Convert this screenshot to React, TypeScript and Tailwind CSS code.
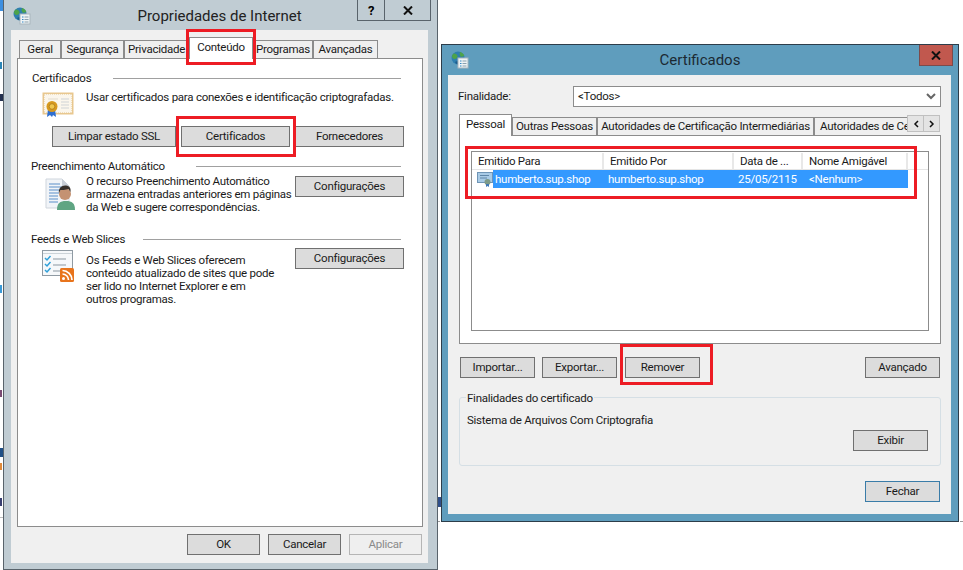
import React from "react";

const font = { fontFamily: 'Roboto, "Noto Sans", sans-serif' };

function Btn({ w, children, variant = "normal", className = "" }: { w: string; children: React.ReactNode; variant?: "normal" | "disabled" | "default"; className?: string }) {
  const v =
    variant === "disabled"
      ? "border-[#b5b5b5] bg-[#efefef] text-[#8a8a8a]"
      : variant === "default"
      ? "border-[#3a7ca8] bg-[#dcdcdc] text-[#1a1a1a]"
      : "border-[#707070] bg-[#dcdcdc] text-[#1a1a1a]";
  return <div className={`${w} h-[21px] shrink-0 border flex items-center justify-center leading-none ${v} ${className}`}>{children}</div>;
}

function Tab({ w, children, active = false, className = "" }: { w: string; children: React.ReactNode; active?: boolean; className?: string }) {
  return active ? (
    <div className={`${w} h-[22px] border border-b-0 border-[#8c8c8c] bg-white flex items-start justify-center pt-[2px] relative z-10 -mb-px leading-[15px] ${className}`}>{children}</div>
  ) : (
    <div className={`${w} h-[18px] border border-b-0 border-[#8c8c8c] bg-[#efefef] flex items-center justify-center whitespace-nowrap overflow-hidden ${className}`}>{children}</div>
  );
}

function Heading({ children, lineClass, mt }: { children: React.ReactNode; lineClass: string; mt: string }) {
  return (
    <div className={`flex items-center ${mt} h-[14px]`}>
      <span className="whitespace-nowrap">{children}</span>
      <div className={`h-px bg-[#a0a0a0] ${lineClass}`} />
    </div>
  );
}

function GlobeIcon() {
  return (
    <svg width="18" height="18" viewBox="0 0 18 18">
      <circle cx="7" cy="7" r="6.500" fill="#2f7fb0" />
      <path d="M3 2.500c2 0 3 1 3.500 2.500S5 8 3.500 8 .8 6 1 5s1-2.500 2-2.500zM9 1c2 .5 4 2 4.300 4L10 6 8.500 3.500z" fill="#4da34a" />
      <path d="M4 11c1-1 3-1 4 0l-1 2.300C6 13.500 5 12.500 4 11z" fill="#1e5c8a" />
      <rect x="7" y="7" width="10" height="10" fill="#eef3f5" stroke="#a9b6bd" />
      <path d="M9 10h1.500M9 12.500h1.500M9 15h1.500" stroke="#2f86c5" strokeWidth="1.200" />
      <path d="M11.500 10h4M11.500 12.500h4M11.500 15h4" stroke="#8da0ad" />
    </svg>
  );
}

function CertIcon() {
  return (
    <svg width="32" height="26" viewBox="0 0 32 26">
      <rect x="0.500" y="0.500" width="31" height="22" fill="#e9c88f" />
      <rect x="2" y="2" width="28" height="19" fill="#fbf6ec" stroke="#e5c58d" strokeDasharray="1 1" />
      <path d="M19 7h8M19 10h8M19 13h8M19 16h8" stroke="#cfd3d6" />
      <path d="M6 7h10" stroke="#e2dccf" />
      <path d="M6 17l-1 8 3-2 2 2 1-2 3 2-1-8z" fill="#2f6fd0" />
      <circle cx="10" cy="14.500" r="5.500" fill="#d79a1f" />
      <circle cx="10" cy="14.500" r="2.800" fill="#f0c64c" stroke="#a8741a" strokeWidth="0.700" />
    </svg>
  );
}

function AutoIcon() {
  return (
    <svg width="30" height="32" viewBox="0 0 30 32">
      <path d="M1 1h16l7 7v22H1z" fill="#f1f4f8" stroke="#cfd5dc" />
      <path d="M17 1v7h7z" fill="#c8ced6" />
      <path d="M4 6h11M4 9h13M4 12h10M4 15h10M4 18h9M4 21h9M4 24h9" stroke="#5b8fc9" />
      <path d="M12 32c0-7 3-9 9-9s9 2 9 9z" fill="#5fa583" />
      <circle cx="20" cy="16" r="6" fill="#c49272" />
      <path d="M14 15c-1-5 3-8 7-7.500s5 3 4.500 6.500l-2-3c-3 1-7 1-8 1z" fill="#37302a" />
    </svg>
  );
}

function FeedIcon() {
  return (
    <svg width="32" height="32" viewBox="0 0 32 32">
      <rect x="0.500" y="0.500" width="30" height="25" fill="#f6f8fa" stroke="#8f9aa3" />
      <path d="M1 3.500h29" stroke="#ccd3d8" />
      <path d="M3 8l2 2 3.500-4M3 14l2 2 3.500-4M3 20l2 2 3.500-4" fill="none" stroke="#2f9fd8" strokeWidth="1.500" />
      <path d="M11 9h13M11 15h13M11 21h8" stroke="#8b97a1" />
      <rect x="18" y="18" width="14" height="14" rx="1.500" fill="#e8741c" />
      <circle cx="21.500" cy="28.500" r="1.500" fill="#fff" />
      <path d="M20.500 24a6 6 0 0 1 6 6M20.500 20.500a9.500 9.500 0 0 1 9.500 9.500" fill="none" stroke="#fff" strokeWidth="1.700" />
    </svg>
  );
}

function RowCertIcon() {
  return (
    <svg width="16" height="15" viewBox="0 0 16 15">
      <rect x="0.500" y="0.500" width="15" height="10" fill="#a9cbe6" stroke="#6f95b6" />
      <path d="M3 3.500h9M3 6h7" stroke="#5f86a8" />
      <circle cx="10.500" cy="10" r="3" fill="#7d9a88" />
      <path d="M9 12v3l1.500-1 1.500 1v-3z" fill="#3f78b5" />
    </svg>
  );
}

function Red({ className }: { className: string }) {
  return <div className={`absolute border-[3px] border-[#ed1c24] z-20 pointer-events-none ${className}`} />;
}

function Bit({ className }: { className: string }) {
  return <div className={`absolute ${className}`} />;
}

export default function App() {
  return (
    <div className="relative w-[963px] h-[570px] overflow-hidden bg-white text-[11.5px] leading-[13px] tracking-[-0.25px] text-[#1a1a1a]" style={font}>
      {/* desktop remnants */}
      <Bit className="left-0 top-0 w-[3px] h-[11px] bg-[#3d8fe0]" />
      <Bit className="left-0 top-[62px] w-[2px] h-[7px] bg-[#2a86b8]" />
      <Bit className="left-0 top-[94px] w-[3px] h-[7px] bg-[#23304f]" />
      <Bit className="left-0 top-[285px] w-[2px] h-[8px] bg-[#3a9ad8]" />
      <Bit className="left-0 top-[390px] w-[2px] h-[7px] bg-[#7a4a72]" />
      <Bit className="left-0 top-[448px] w-[3px] h-[9px] bg-[#1f4f86]" />
      <Bit className="left-0 top-[463px] w-[2px] h-[7px] bg-[#e08a3a]" />
      <Bit className="left-0 top-[498px] w-[2px] h-[8px] bg-[#3a3f70]" />
      <Bit className="left-0 top-[517px] w-[3px] h-px bg-[#bdbdbd]" />
      <Bit className="left-[438px] top-[497px] w-[3px] h-[10px] bg-[#2f4f8a]" />
      <Bit className="left-[437px] top-[521px] w-[526px] h-0 border-t border-dashed border-[#9a9a9a]" />

      {/* Propriedades de Internet */}
      <section className="absolute left-[3px] top-[-1px] w-[435px] h-[571px] border border-[#59636b] bg-[#c0ccd3] flex flex-col">
        <header className="relative h-[30px] shrink-0 flex items-center justify-center pt-[2px]">
          <div className="absolute left-[9px] top-[7px]"><GlobeIcon /></div>
          <span className="text-[15px] tracking-[0px] text-[#222] -ml-[2px]">Propriedades de Internet</span>
          <div className="absolute right-[6px] top-0 flex h-[21px] border border-t-0 border-[#59636b]">
            <div className="w-[27px] flex items-center justify-center border-r border-[#59636b] font-bold text-[13px] text-black">?</div>
            <div className="w-[45px] flex items-center justify-center">
              <svg width="10" height="9" viewBox="0 0 10 9"><path d="M1 0.500l8 8M9 0.500l-8 8" stroke="#111" strokeWidth="2" /></svg>
            </div>
          </div>
        </header>
        <div className="ml-[7px] w-[417px] h-[533px] bg-[#f0f0f0] flex flex-col pt-[8px] px-[6px]">
          <div className="flex items-end h-[20px] pl-[2px]">
            <Tab w="w-[42px]">Geral</Tab>
            <Tab w="w-[63px]">Segurança</Tab>
            <Tab w="w-[65px]">Privacidade</Tab>
            <Tab w="w-[64px]" active>Conteúdo</Tab>
            <Tab w="w-[60px]">Programas</Tab>
            <Tab w="w-[65px]">Avançadas</Tab>
          </div>
          <div className="w-[406px] h-[469px] border border-[#8c8c8c] bg-white flex flex-col pl-[13px] pr-[18px]">
            <Heading mt="mt-[12px]" lineClass="ml-[22px] mr-[3px] flex-1"><span className="ml-[1px]">Certificados</span></Heading>
            <div className="flex mt-[5px] h-[33px]">
              <div className="ml-[11px] mt-[2px] w-[44px] shrink-0"><CertIcon /></div>
              <p className="whitespace-nowrap pt-[1px]">Usar certificados para conexões e identificação criptografadas.</p>
            </div>
            <div className="flex gap-[5px] ml-[21px] mt-[3px]">
              <Btn w="w-[124px]">Limpar estado SSL</Btn>
              <Btn w="w-[109px]">Certificados</Btn>
              <Btn w="w-[109px]">Fornecedores</Btn>
            </div>
            <Heading mt="mt-[12px]" lineClass="ml-[31px] mr-[3px] flex-1">Preenchimento Automático</Heading>
            <div className="flex mt-[3px]">
              <div className="ml-[14px] mt-[2px] w-[41px] shrink-0"><AutoIcon /></div>
              <p className="w-[209px] -mt-[1px]">O recurso Preenchimento Automático<br />armazena entradas anteriores em páginas<br />da Web e sugere correspondências.</p>
              <Btn w="w-[109px]">Configurações</Btn>
            </div>
            <Heading mt="mt-[18px]" lineClass="ml-[18px] mr-[3px] flex-1">Feeds e Web Slices</Heading>
            <div className="flex mt-[2px]">
              <div className="ml-[11px] mt-[2px] w-[44px] shrink-0"><FeedIcon /></div>
              <p className="w-[209px] pt-[6px]">Os Feeds e Web Slices oferecem<br />conteúdo atualizado de sites que pode<br />ser lido no Internet Explorer e em<br />outros programas.</p>
              <Btn w="w-[109px]">Configurações</Btn>
            </div>
          </div>
          <div className="flex justify-end gap-[8px] mt-[7px]">
            <Btn w="w-[73px]">OK</Btn>
            <Btn w="w-[73px]">Cancelar</Btn>
            <Btn w="w-[73px]" variant="disabled">Aplicar</Btn>
          </div>
        </div>
      </section>

      <Red className="left-[186px] top-[29px] w-[70px] h-[36px]" />
      <Red className="left-[176px] top-[116px] w-[120px] h-[41px]" />

      {/* Certificados */}
      <section className="absolute left-[441px] top-[44px] w-[518px] h-[478px] border border-[#2d3d4a] bg-[#5f9dbd] flex flex-col">
        <header className="relative h-[30px] shrink-0 flex items-center justify-center">
          <div className="absolute left-[9px] top-[6px]"><GlobeIcon /></div>
          <span className="text-[15px] tracking-[0px] text-[#1c2a33]">Certificados</span>
          <div className="absolute left-[477px] top-0 w-[34px] h-[21px] bg-[#c1584e] border border-t-0 border-[#7d4a4a] flex items-center justify-center">
            <svg width="10" height="9" viewBox="0 0 10 9"><path d="M1 0.500l8 8M9 0.500l-8 8" stroke="#111" strokeWidth="2" /></svg>
          </div>
        </header>
        <div className="ml-[6px] w-[503px] h-[439px] bg-[#f0f0f0] flex flex-col pl-[11px]">
          <div className="flex items-center mt-[11px] h-[20px] -ml-px">
            <span className="w-[115px] shrink-0 pt-[1px]">Finalidade:</span>
            <div className="w-[368px] h-[21px] shrink-0 border border-[#8c8c8c] bg-white flex items-center justify-between pl-[4px] pr-[4px] pt-[1px]">
              <span>&lt;Todos&gt;</span>
              <svg width="10" height="7" viewBox="0 0 10 7"><path d="M1 1l4 4 4-4" fill="none" stroke="#666" strokeWidth="2" /></svg>
            </div>
          </div>
          <div className="relative flex items-end h-[21px] mt-[8px] w-[481px]">
            <Tab w="w-[53px]" active>Pessoal</Tab>
            <Tab w="w-[85px]">Outras Pessoas</Tab>
            <Tab w="w-[217px]">Autoridades de Certificação Intermediárias</Tab>
            <div className="w-[95px] h-[18px] border-t border-l border-[#8c8c8c] bg-[#efefef] pl-[5px] flex items-center whitespace-nowrap">Autoridades de Ce</div>
            <div className="absolute right-0 top-[1px] flex z-10 bg-[#f0f0f0]">
              <div className="w-[17px] h-[17px] border border-[#c0c0c0] bg-[#e4e4e4] flex items-center justify-center">
                <svg width="6" height="8" viewBox="0 0 6 8"><path d="M5 1L2 4l3 3" fill="none" stroke="#111" strokeWidth="1.500" /></svg>
              </div>
              <div className="w-[16px] h-[17px] border border-l-0 border-[#c0c0c0] bg-[#e4e4e4] flex items-center justify-center">
                <svg width="6" height="8" viewBox="0 0 6 8"><path d="M1 1l3 3-3 3" fill="none" stroke="#111" strokeWidth="1.500" /></svg>
              </div>
            </div>
          </div>
          <div className="w-[482px] h-[209px] border border-[#8c8c8c] bg-white pl-[11px] pt-[15px]">
            <div className="w-[458px] h-[180px] border border-[#8c8c8c] flex flex-col">
              <div className="flex h-[18px] border-b border-[#e5e5e5] shrink-0 pt-[1px]">
                {[["w-[132px]", "Emitido Para"], ["w-[130px]", "Emitido Por"], ["w-[69px]", "Data de ..."], ["w-[105px]", "Nome Amigável"]].map(([w, t]) => (
                  <div key={t} className={`${w} shrink-0 border-r-2 border-[#e8e8e8] pl-[6px] flex items-center whitespace-nowrap`}>{t}</div>
                ))}
              </div>
              <div className="flex h-[18px] items-center shrink-0">
                <div className="w-[21px] pl-[5px] shrink-0"><RowCertIcon /></div>
                <div className="w-[415px] h-[18px] bg-[#3399ff] text-white flex items-center">
                  <span className="w-[115px] pl-[2px] shrink-0">humberto.sup.shop</span>
                  <span className="w-[130px] shrink-0">humberto.sup.shop</span>
                  <span className="w-[71px] shrink-0">25/05/2115</span>
                  <span>&lt;Nenhum&gt;</span>
                </div>
              </div>
            </div>
          </div>
          <div className="flex w-[481px] mt-[13px] pl-[1px]">
            <Btn w="w-[75px]">Importar...</Btn>
            <Btn w="w-[75px]" className="ml-[7px]">Exportar...</Btn>
            <Btn w="w-[75px]" className="ml-[8px]">Remover</Btn>
            <Btn w="w-[75px]" className="ml-auto">Avançado</Btn>
          </div>
          <div className="relative w-[482px] h-[69px] mt-[19px] border border-[#d5dfe5] rounded-[3px] pl-[7px] pt-[16px] shrink-0">
            <span className="absolute left-[6px] top-[-6px] bg-[#f0f0f0] px-[1px]">Finalidades do certificado</span>
            <p>Sistema de Arquivos Com Criptografia</p>
            <div className="flex justify-end mt-[3px] pr-[12px]"><Btn w="w-[75px]">Exibir</Btn></div>
          </div>
          <div className="flex justify-end w-[481px] mt-[15px]"><Btn w="w-[75px]" variant="default">Fechar</Btn></div>
        </div>
      </section>

      <Red className="left-[465px] top-[146px] w-[452px] h-[53px]" />
      <Red className="left-[620px] top-[344px] w-[93px] h-[41px]" />
    </div>
  );
}
